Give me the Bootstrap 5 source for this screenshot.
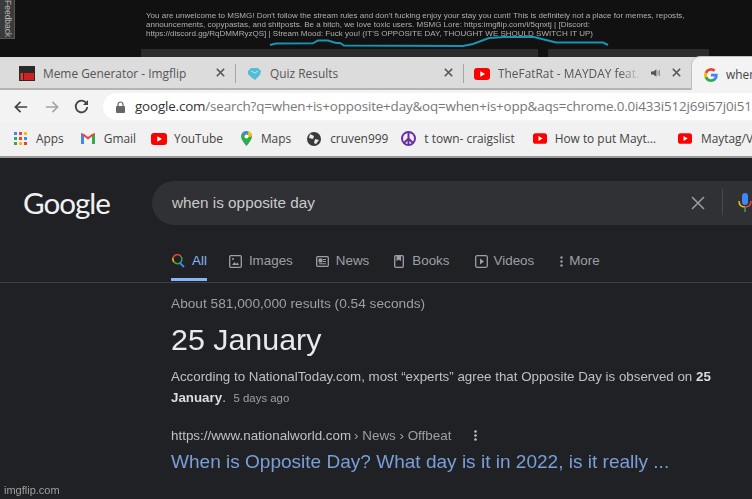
<!DOCTYPE html>
<html lang="en">
<head>
<meta charset="utf-8">
<title>Opposite day</title>
<link href="https://cdn.jsdelivr.net/npm/bootstrap@5.3.0/dist/css/bootstrap.min.css" rel="stylesheet">
<style>
html,body{margin:0;width:752px;height:499px;overflow:hidden;background:#202124;font-family:"Liberation Sans",Arial,sans-serif}
.shot{width:752px;height:499px;overflow:hidden;position:relative;filter:blur(.35px)}
.topzone{height:57px;background:#111112;overflow:hidden;position:relative}
.fb{position:absolute;left:0;top:0;width:15px;height:39px;background:#3a3a3a;border:1px solid #555;border-left:0;border-top:0;color:#b5b5b5;font-size:8.5px;writing-mode:vertical-rl;line-height:13px;text-align:right;padding-bottom:6px}
.msg{margin-left:146px;padding-top:10.500px;width:560px;font-size:8.03px;line-height:9.3px;color:#b0b0b0;white-space:nowrap}
.spark{position:absolute;left:268px;top:35px}
.panes{position:absolute;top:49px;left:141px;display:flex;gap:10px}
.pane1{width:397px;height:10px;background:#2c2c2c}.pane2{width:161px;height:10px;background:#2c2c2c}
.ui{font-family:"Open Sans","Noto Sans",sans-serif}
.tabs{height:33px;background:#dcdcdc;border-bottom:2px solid #b4b4b4;color:#555;font-size:11.9px;position:relative;white-space:nowrap;overflow:visible;z-index:1}
.tabi{position:absolute;top:0;height:33px;display:flex;align-items:center}
.tabi svg{flex:none}
.tabfade{display:block;width:143px;overflow:hidden;-webkit-mask-image:linear-gradient(90deg,#000 85%,transparent)}
.sep{position:absolute;top:7px;width:1px;height:19px;background:#a5a5a5}
.act{position:absolute;left:691px;top:-1px;width:70px;height:34px;background:#f3f3f3;border-radius:9px 0 0 0;border:1px solid #c0c0c0;border-right:0;border-bottom:0;display:flex;align-items:center;padding-left:12px;padding-top:2px;gap:8px;color:#444;font-size:11.9px}
.closex{position:absolute;top:11px}
.addr{height:32px;background:#f3f3f3;display:flex;align-items:center;padding-left:14px;padding-top:1px}
.omni{margin-left:14px;flex:1;height:27px;background:#fff;border-radius:14px 0 0 14px;display:flex;align-items:center;padding-left:13px;font-size:13.4px;letter-spacing:-.16px;white-space:nowrap;overflow:hidden;color:#777}
.omni b{font-weight:400;color:#333}
.marks{height:36px;background:#f1f1f1;border-bottom:2px solid #9a9a9a;display:flex;align-items:center;padding-left:14px;font-size:11.9px;color:#444;white-space:nowrap;overflow:hidden}
.mk{display:flex;align-items:center;flex:none}
.ghead{height:125px;background:#202124;border-bottom:1px solid #3c4043;position:relative}
.glogo{position:absolute;left:23px;top:27px;font-family:"Lato",sans-serif;font-size:29.6px;line-height:36px;color:#f1f1f1;letter-spacing:-1px;font-weight:400}
.sbox{position:absolute;left:152px;top:23px;width:620px;height:44px;border-radius:22px;background:#303134;color:#c8cacc;font-size:15.3px;line-height:43px;padding-left:20px}
.sx{position:absolute;left:691px;top:38px}
.sdiv{position:absolute;left:722px;top:31px;width:1px;height:26px;background:#484a4d}
.mic{position:absolute;left:738px;top:35px}
.gtabs{position:absolute;left:171px;top:92px;display:flex;font-size:13.4px;color:#9aa0a6;line-height:22px}
.gt{display:flex;align-items:center;gap:7px;flex:none}
.gact{color:#8ab4f8;position:relative}
.gact::after{content:"";position:absolute;left:0;right:0;top:28px;height:3px;background:#8ab4f8}
.res{padding:12px 0 0 171px;white-space:nowrap}
.cnt{font-size:13.7px;line-height:18px;color:#9aa0a6;margin-bottom:8px}
.ans{font-size:30.4px;line-height:36px;color:#e8eaed;margin-bottom:9px}
.snip{font-size:13.34px;line-height:21px;color:#bdc1c6;margin-bottom:17px}
.snip b{color:#dadce0;font-weight:700}
.ago{color:#9aa0a6;font-size:11.4px;margin-left:4px}
.cite{font-size:13.4px;line-height:19px;color:#bdc1c6;display:flex;align-items:center;gap:3px}
.cite i{font-style:normal;color:#9aa0a6}
.rlink{font-size:19.05px;line-height:28px;margin-top:3px;color:#8ab4f8;opacity:.85}
.wm{position:absolute;left:4px;bottom:2px;font-size:11px;line-height:13px;color:#a0a0a0}
</style>
</head>
<body>
<div class="shot">
  <div class="topzone">
    <div class="fb">Feedback</div>
    <div class="msg">You are unwelcome to MSMG! Don't follow the stream rules and don't fucking enjoy your stay you cunt! This is definitely not a place for memes, reposts,<br>announcements, copypastas, and shitposts. Be a bitch, we love toxic users. MSMG Lore: https:imgflip.com/i/5qnxtj | [Discord:<br>https://discord.gg/RqDMMRyzQS] | Stream Mood: Fuck you! (IT'S OPPOSITE DAY, THOUGHT WE SHOULD SWITCH IT UP)</div>
    <svg class="spark" width="342" height="14" viewBox="0 0 342 14"><path d="M2 10 L8 8.500 L45 8.300 L50 5.500 L60 5.500 L68 8 L72 8 L76 10.500 L195 11 L205 9 L221 3 L236 2 L266 2 L278 5 L288 7.500 L335 7.500 L340 10" fill="none" stroke="#1795b5" stroke-width="2"/></svg>
    <div class="panes"><div class="pane1"></div><div class="pane2"></div></div>
  </div>
  <div class="tabs ui">
    <div class="tabi" style="left:19px"><svg width="16" height="15" viewBox="0 0 16 15"><rect width="16" height="15" fill="#2a2a2a"/><rect x="1.500" y="7" width="2.500" height="7" fill="#e33"/><rect x="5" y="7" width="10" height="7" fill="#c22"/></svg><span class="ms-2">Meme Generator - Imgflip</span></div>
    <svg class="closex" style="left:216px" width="9" height="9" viewBox="0 0 9 9"><path d="M.8.8L8.200 8.200M8.200.8L.8 8.200" stroke="#555" stroke-width="1.600"/></svg>
    <div class="sep" style="left:235px"></div>
    <div class="tabi" style="left:247px"><svg width="15" height="14" viewBox="0 0 15 14"><path d="M1 4 L4 1 L11 1 L14 4 L13 8 L8 13 L4 10 L1 7Z" fill="#55bcd8"/><path d="M4 4 L8 6 L11 4" stroke="#b8e6f2" fill="none"/></svg><span class="ms-2">Quiz Results</span></div>
    <svg class="closex" style="left:444px" width="9" height="9" viewBox="0 0 9 9"><path d="M.8.8L8.200 8.200M8.200.8L.8 8.200" stroke="#555" stroke-width="1.600"/></svg>
    <div class="sep" style="left:463px"></div>
    <div class="tabi" style="left:474px"><svg width="16" height="12" viewBox="0 0 16 12"><rect width="16" height="12" rx="3" fill="#f00"/><path d="M6.300 3.200 L11 6 L6.300 8.800Z" fill="#fff"/></svg><span class="ms-2 tabfade">TheFatRat - MAYDAY feat.</span></div>
    <svg style="position:absolute;left:651px;top:11px" width="10" height="10" viewBox="0 0 13 12"><path d="M0 4H3L7 1V11L3 8H0Z" fill="#555"/><path d="M9 3V9M11 2V10" stroke="#777"/></svg>
    <svg class="closex" style="left:672px" width="9" height="9" viewBox="0 0 9 9"><path d="M.8.8L8.200 8.200M8.200.8L.8 8.200" stroke="#555" stroke-width="1.600"/></svg>
    <div class="act"><svg width="14" height="14" viewBox="0 0 18 18"><path d="M17.600 9.200c0-.6-.1-1.200-.2-1.800H9v3.400h4.800a4.100 4.100 0 0 1-1.800 2.700v2.300h2.900c1.700-1.600 2.700-3.900 2.700-6.600z" fill="#4285f4"/><path d="M9 18c2.400 0 4.500-.8 5.900-2.200L12 13.500c-.8.500-1.800.9-3 .9-2.300 0-4.300-1.600-5-3.700H1v2.300A9 9 0 0 0 9 18z" fill="#34a853"/><path d="M4 10.700a5.400 5.400 0 0 1 0-3.400V5H1a9 9 0 0 0 0 8z" fill="#fbbc05"/><path d="M9 3.600c1.300 0 2.500.5 3.400 1.300L15 2.400A9 9 0 0 0 1 5l3 2.300c.7-2.100 2.700-3.700 5-3.700z" fill="#ea4335"/></svg><span>when</span></div>
  </div>
  <div class="addr ui">
    <svg width="15" height="14" viewBox="0 0 16 14"><path d="M14 7H2M7 1.500 L1.500 7 L7 12.500" fill="none" stroke="#444" stroke-width="1.800"/></svg>
    <svg style="margin-left:15px" width="15" height="14" viewBox="0 0 16 14"><path d="M2 7H14M9 1.500 L14.500 7 L9 12.500" fill="none" stroke="#a5a5a5" stroke-width="1.800"/></svg>
    <svg style="margin-left:15px" width="15" height="15" viewBox="0 0 15 15"><path d="M12.500 4.500A5.800 5.800 0 1 0 13.300 8" fill="none" stroke="#444" stroke-width="1.800"/><path d="M14 1V6H9Z" fill="#444"/></svg>
    <div class="omni"><svg style="flex:none" width="9" height="12" viewBox="0 0 9 12"><path d="M2 5V3.500a2.500 2.500 0 0 1 5 0V5" fill="none" stroke="#666" stroke-width="1.200"/><rect y="5" width="9" height="7" rx="1" fill="#666"/></svg><span style="margin-left:10px"><b>google.com</b>/search?q=when+is+opposite+day&amp;oq=when+is+opp&amp;aqs=chrome.0.0i433i512j69i57j0i512</span></div>
  </div>
  <div class="marks ui">
    <div class="mk" style="gap:9px"><svg width="13" height="13" viewBox="0 0 13 13"><rect width="3" height="3" fill="#4285f4"/><rect x="5" width="3" height="3" fill="#ea4335"/><rect x="10" width="3" height="3" fill="#fbbc05"/><rect y="5" width="3" height="3" fill="#34a853"/><rect x="5" y="5" width="3" height="3" fill="#ea4335"/><rect x="10" y="5" width="3" height="3" fill="#4285f4"/><rect y="10" width="3" height="3" fill="#34a853"/><rect x="5" y="10" width="3" height="3" fill="#fbbc05"/><rect x="10" y="10" width="3" height="3" fill="#ea4335"/></svg>Apps</div>
    <div class="mk" style="margin-left:17px;gap:9px"><svg width="14" height="11" viewBox="0 0 14 11"><path d="M0 11V1L3 1V11Z" fill="#4285f4"/><path d="M11 11V1H14V11Z" fill="#34a853"/><path d="M0 1 L7 6.500 L14 1 L14 0 L11 1 L7 4 L3 1 L0 0Z" fill="#ea4335"/></svg>Gmail</div>
    <div class="mk" style="margin-left:15px;gap:7px"><svg width="16" height="12" viewBox="0 0 16 12"><rect width="16" height="12" rx="3" fill="#f00"/><path d="M6.300 3.200 L11 6 L6.300 8.800Z" fill="#fff"/></svg>YouTube</div>
    <div class="mk" style="margin-left:18px;gap:9px"><svg width="11" height="15" viewBox="0 0 11 15"><path d="M5.500 0A5.500 5.500 0 0 0 0 5.500C0 9 5.500 15 5.500 15S11 9 11 5.500A5.500 5.500 0 0 0 5.500 0Z" fill="#34a853"/><path d="M1 3 A5.500 5.500 0 0 1 5.500 0 L7 4Z" fill="#4285f4"/><path d="M7 0.300A5.500 5.500 0 0 1 11 5.500 L7 6Z" fill="#fbbc05"/><circle cx="5.500" cy="5.500" r="2" fill="#fff"/></svg>Maps</div>
    <div class="mk" style="margin-left:16px;gap:9px"><svg width="14" height="14" viewBox="0 0 14 14"><circle cx="7" cy="7" r="7" fill="#3a3a3a"/><path d="M3 2 L7 4 L6 7 L2 6ZM8 7 L12 8 L9 12 L7 11Z" fill="#eee"/></svg>cruven999</div>
    <div class="mk" style="margin-left:13px;gap:8px"><svg width="15" height="15" viewBox="0 0 15 15"><circle cx="7.500" cy="7.500" r="6.500" fill="none" stroke="#6a2fa8" stroke-width="2"/><path d="M7.500 1V14M7.500 7.500L3 12M7.500 7.500L12 12" stroke="#6a2fa8" stroke-width="2"/></svg>t town- craigslist</div>
    <div class="mk" style="margin-left:18px;gap:8px"><svg width="14" height="11" viewBox="0 0 16 12"><rect width="16" height="12" rx="3" fill="#f00"/><path d="M6.300 3.200 L11 6 L6.300 8.800Z" fill="#fff"/></svg>How to put Mayt…</div>
    <div class="mk" style="margin-left:22px;gap:9px"><svg width="14" height="11" viewBox="0 0 16 12"><rect width="16" height="12" rx="3" fill="#f00"/><path d="M6.300 3.200 L11 6 L6.300 8.800Z" fill="#fff"/></svg>Maytag/V</div>
  </div>
  <div class="ghead">
    <div class="glogo">Google</div>
    <div class="sbox">when is opposite day</div>
    <svg class="sx" width="14" height="14" viewBox="0 0 14 14"><path d="M1 1L13 13M13 1L1 13" stroke="#9aa0a6" stroke-width="1.500"/></svg>
    <div class="sdiv"></div>
    <svg class="mic" width="14" height="20" viewBox="0 0 14 20"><rect x="4" y="0" width="6" height="12" rx="3" fill="#4285f4"/><path d="M1 8C1 12 3 14 7 14" fill="none" stroke="#fbbc05" stroke-width="1.500"/><path d="M7 14C11 14 13 12 13 8" fill="none" stroke="#ea4335" stroke-width="1.500"/><rect x="6.300" y="14" width="1.500" height="5" fill="#34a853"/></svg>
    <div class="gtabs">
      <div class="gt gact"><svg style="margin-left:1px" width="13" height="14" viewBox="0 0 13 14"><path d="M9 2.500A4.500 4.500 0 0 0 1 4" fill="none" stroke="#ea4335" stroke-width="1.500"/><path d="M1 4A4.500 4.500 0 0 0 2 8" fill="none" stroke="#fbbc05" stroke-width="1.500"/><path d="M2 8A4.500 4.500 0 0 0 7 9.500" fill="none" stroke="#34a853" stroke-width="1.500"/><path d="M7 9.500A4.500 4.500 0 0 0 9 2.500" fill="none" stroke="#34a853" stroke-width="1.500"/><path d="M8 9 L12 13" stroke="#4285f4" stroke-width="1.800"/></svg>All</div>
      <div class="gt" style="margin-left:22px"><svg width="13" height="13" viewBox="0 0 13 13"><rect x=".7" y=".7" width="11.600" height="11.600" rx="1" fill="none" stroke="#9aa0a6" stroke-width="1.300"/><path d="M3 10L5.500 7L7 9L8.500 7.500L10 10Z" fill="#9aa0a6"/><circle cx="4" cy="4" r="1" fill="#9aa0a6"/></svg>Images</div>
      <div class="gt" style="margin-left:23px"><svg width="13" height="11" viewBox="0 0 13 11"><rect x=".7" y=".7" width="11.600" height="9.600" rx="1" fill="none" stroke="#9aa0a6" stroke-width="1.300"/><path d="M3 3H6V6H3ZM7 3.500H10M7 5.500H10M3 7.800H10" stroke="#9aa0a6" fill="#9aa0a6"/></svg>News</div>
      <div class="gt" style="margin-left:25px;gap:8px"><svg width="10" height="13" viewBox="0 0 10 13"><rect x=".7" y=".7" width="8.600" height="11.600" rx="1" fill="none" stroke="#9aa0a6" stroke-width="1.300"/><path d="M2.500 1H7V6L4.800 4.800 2.500 6Z" fill="#9aa0a6"/></svg>Books</div>
      <div class="gt" style="margin-left:25px;gap:6px"><svg width="13" height="13" viewBox="0 0 13 13"><rect x=".7" y=".7" width="11.600" height="11.600" rx="1.500" fill="none" stroke="#9aa0a6" stroke-width="1.300"/><path d="M5 3.500L9 6.500L5 9.500Z" fill="#9aa0a6"/></svg>Videos</div>
      <div class="gt" style="margin-left:26px;gap:6px"><svg width="3" height="11" viewBox="0 0 3 11"><circle cx="1.500" cy="1.500" r="1.200" fill="#9aa0a6"/><circle cx="1.500" cy="5.500" r="1.200" fill="#9aa0a6"/><circle cx="1.500" cy="9.500" r="1.200" fill="#9aa0a6"/></svg>More</div>
    </div>
  </div>
  <div class="res">
    <div class="cnt">About 581,000,000 results (0.54 seconds)</div>
    <div class="ans">25 January</div>
    <div class="snip">According to NationalToday.com, most “experts” agree that Opposite Day is observed on <b>25</b><br><b>January</b>. <span class="ago">5 days ago</span></div>
    <div class="cite">https://www.nationalworld.com <i>› News › Offbeat</i><svg style="margin-left:20px" width="3" height="11" viewBox="0 0 3 11"><circle cx="1.500" cy="1.500" r="1.300" fill="#bdc1c6"/><circle cx="1.500" cy="5.500" r="1.300" fill="#bdc1c6"/><circle cx="1.500" cy="9.500" r="1.300" fill="#bdc1c6"/></svg></div>
    <div class="rlink">When is Opposite Day? What day is it in 2022, is it really ...</div>
  </div>
  <div class="wm">imgflip.com</div>
</div>
</body>
</html>
